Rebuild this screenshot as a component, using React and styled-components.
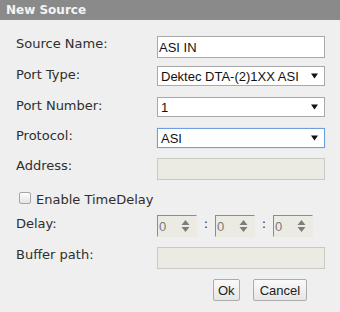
import React from "react";
import styled, { createGlobalStyle } from "styled-components";

const Global = createGlobalStyle`
  html, body { margin: 0; padding: 0; background: #efefef; }
  #root { width: 340px; height: 312px; }
`;

const Dialog = styled.div`
  width: 340px;
  height: 312px;
  background: #efefef;
  display: flex;
  flex-direction: column;
  font-family: "DejaVu Sans", Verdana, sans-serif;
  font-size: 13px;
  color: #333;
`;

const Header = styled.div`
  height: 20px;
  background: #8a8a8a;
  color: #f4f4f4;
  font-family: "DejaVu Sans", Verdana, sans-serif;
  font-weight: bold;
  font-size: 12px;
  line-height: 20px;
  padding-left: 6px;
  flex: none;
`;

const Body = styled.div`
  padding: 16px 15px 0 16px;
  display: flex;
  flex-direction: column;
`;

const Row = styled.div`
  display: grid;
  grid-template-columns: 141px 168px;
  align-items: start;
  height: ${(p) => p.$h}px;
`;

const Label = styled.div`
  line-height: 15px;
  padding-top: ${(p) => p.$pt || 0}px;
  color: #2e2e2e;
  white-space: nowrap;
`;

const TextInput = styled.input`
  box-sizing: border-box;
  width: 168px;
  height: 22px;
  margin: 0;
  padding: 0 1px;
  font-family: "Liberation Sans", Arial, sans-serif;
  font-size: 13px;
  color: #111;
  background: ${(p) => (p.disabled ? "#ebebe4" : "#fff")};
  border: 1px solid ${(p) => (p.disabled ? "#c9c9c4" : "#a9a9a9")};
  outline: none;
`;

const Select = styled.div`
  box-sizing: border-box;
  width: 168px;
  height: 20px;
  display: flex;
  align-items: center;
  justify-content: space-between;
  padding: 0 6px 0 3px;
  background: #fff;
  border: 1px solid ${(p) => (p.$focused ? "#6f9fe0" : "#a9a9a9")};
  box-shadow: ${(p) => (p.$focused ? "0 0 1px 0 #a8c8f0" : "none")};
  font-family: "Liberation Sans", Arial, sans-serif;
  font-size: 13px;
  color: #111;
`;

const Arrow = () => (
  <svg width="7" height="6" viewBox="0 0 7 6">
    <path d="M0 0.5 H7 L3.5 5.5 Z" fill="#111" />
  </svg>
);

const CheckRow = styled.label`
  display: flex;
  align-items: flex-start;
  height: 23px;
  padding-left: 3px;
`;

const Check = styled.span`
  box-sizing: border-box;
  width: 12px;
  height: 12px;
  border: 1px solid #a6a6a6;
  border-radius: 2px;
  background: linear-gradient(#fcfcfc, #e4e4e4);
  flex: none;
`;

const CheckText = styled.span`
  margin-left: 5px;
  line-height: 15px;
  color: #2e2e2e;
`;

const SpinGroup = styled.div`
  display: flex;
  align-items: flex-start;
`;

const Spin = styled.div`
  box-sizing: border-box;
  width: 40px;
  height: 22px;
  display: flex;
  align-items: center;
  justify-content: space-between;
  padding: 0 6px 0 1px;
  background: #ebebe4;
  border-style: solid;
  border-width: 1px;
  border-color: #8c8c8c #ebebe4 #ebebe4 #8c8c8c;
  font-family: "Liberation Sans", Arial, sans-serif;
  font-size: 13px;
  color: #7a7a7a;
`;

const Sep = styled.span`
  width: 18px;
  text-align: center;
  line-height: 18px;
  color: #333;
`;

const SpinArrows = () => (
  <svg width="9" height="14" viewBox="0 0 9 14">
    <path d="M4.5 1 L8.5 6 H0.5 Z" fill="#7d7d7d" />
    <path d="M0.5 8 H8.5 L4.5 13 Z" fill="#7d7d7d" />
  </svg>
);

const Buttons = styled.div`
  display: flex;
  gap: 13px;
  padding-left: 197px;
`;

const Button = styled.button`
  box-sizing: border-box;
  height: 22px;
  padding: 0 ${(p) => p.$px}px;
  margin: 0;
  background: linear-gradient(#fafafa, #e6e6e6);
  border: 1px solid #acacac;
  border-radius: 2px;
  font-family: "Liberation Sans", Arial, sans-serif;
  font-size: 13px;
  color: #222;
`;

function Spinner() {
  return (
    <Spin>
      <span>0</span>
      <SpinArrows />
    </Spin>
  );
}

export default function App() {
  return (
    <>
      <Global />
      <Dialog>
        <Header>New Source</Header>
        <Body>
          <Row $h={30}>
            <Label>Source Name:</Label>
            <TextInput readOnly value="ASI IN" />
          </Row>
          <Row $h={31}>
            <Label $pt={1}>Port Type:</Label>
            <Select>
              <span>Dektec DTA-(2)1XX ASI</span>
              <Arrow />
            </Select>
          </Row>
          <Row $h={31}>
            <Label $pt={1}>Port Number:</Label>
            <Select>
              <span>1</span>
              <Arrow />
            </Select>
          </Row>
          <Row $h={30}>
            <Label>Protocol:</Label>
            <Select $focused>
              <span>ASI</span>
              <Arrow />
            </Select>
          </Row>
          <Row $h={34}>
            <Label>Address:</Label>
            <TextInput disabled value="" readOnly />
          </Row>
          <CheckRow>
            <Check />
            <CheckText>Enable TimeDelay</CheckText>
          </CheckRow>
          <Row $h={32}>
            <Label $pt={1}>Delay:</Label>
            <SpinGroup>
              <Spinner />
              <Sep>:</Sep>
              <Spinner />
              <Sep>:</Sep>
              <Spinner />
            </SpinGroup>
          </Row>
          <Row $h={32}>
            <Label>Buffer path:</Label>
            <TextInput disabled value="" readOnly />
          </Row>
          <Buttons>
            <Button $px={4}>Ok</Button>
            <Button $px={6}>Cancel</Button>
          </Buttons>
        </Body>
      </Dialog>
    </>
  );
}
